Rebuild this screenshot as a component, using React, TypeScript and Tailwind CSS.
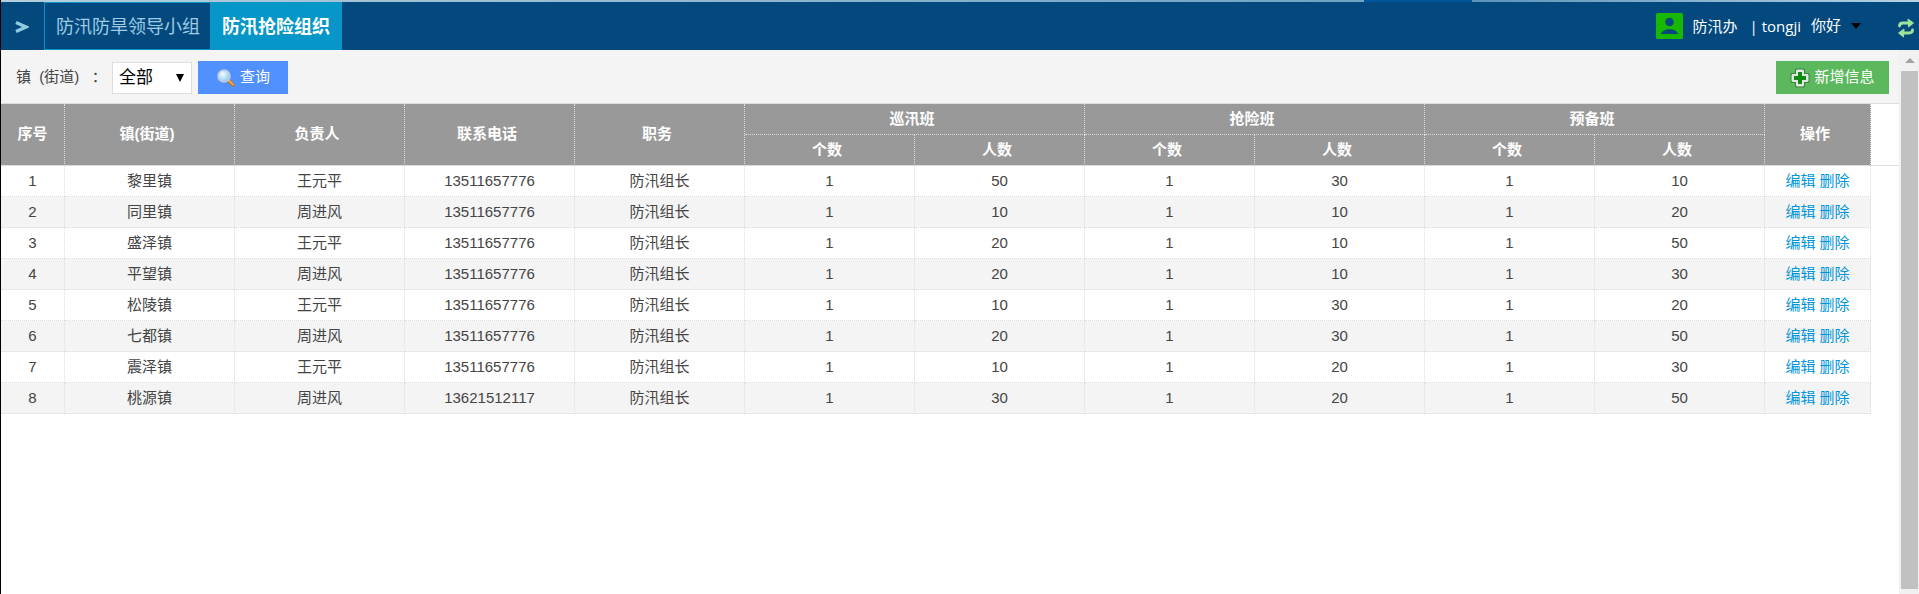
import React from "react";

const rows = [
  ["黎里镇", "王元平", "13511657776", 50, 30, 10],
  ["同里镇", "周进风", "13511657776", 10, 10, 20],
  ["盛泽镇", "王元平", "13511657776", 20, 10, 50],
  ["平望镇", "周进风", "13511657776", 20, 10, 30],
  ["松陵镇", "王元平", "13511657776", 10, 30, 20],
  ["七都镇", "周进风", "13511657776", 20, 30, 50],
  ["震泽镇", "王元平", "13511657776", 10, 20, 30],
  ["桃源镇", "周进风", "13621512117", 30, 20, 50],
];

function SearchIcon() {
  return (
    <svg width="20" height="20" viewBox="0 0 20 20" aria-hidden="true">
      <defs>
        <radialGradient id="lens" cx="0.4" cy="0.35" r="0.7">
          <stop offset="0" stopColor="#f4fcff" />
          <stop offset="1" stopColor="#86c6ee" />
        </radialGradient>
      </defs>
      <path d="M12.5 12.5 L17 17" stroke="#b0702a" strokeWidth="3.6" strokeLinecap="round" />
      <path d="M12.5 12.2 L17 16.6" stroke="#f6a93b" strokeWidth="2" strokeLinecap="round" />
      <circle cx="8" cy="8" r="6" fill="url(#lens)" stroke="#b9cbdc" strokeWidth="1.6" />
    </svg>
  );
}

function PlusIcon() {
  return (
    <svg width="20" height="20" viewBox="0 0 20 20" aria-hidden="true">
      <path d="M6 0.5 h8 l1 1 v3.500 h3.500 l1 1 v8 l-1 1 h-3.500 v3.500 l-1 1 h-8 l-1 -1 v-3.500 h-3.500 l-1 -1 v-8 l1 -1 h3.500 v-3.500 z" fill="#3f8440" />
      <path d="M7 1.500 h6 l1 1 v3.500 h3.500 l1 1 v6 l-1 1 h-3.500 v3.500 l-1 1 h-6 l-1 -1 v-3.500 h-3.500 l-1 -1 v-6 l1 -1 h3.500 v-3.500 z" fill="#e0e8e0" />
      <path d="M8 4 h4 v4 h4 v4 h-4 v4 h-4 v-4 h-4 v-4 h4 z" fill="#0f8a12" />
    </svg>
  );
}

function RefreshIcon() {
  return (
    <svg width="18" height="20" viewBox="0 0 18 20" aria-hidden="true">
      <g fill="none" stroke="#9be39a" strokeWidth="2.800" strokeLinecap="round" strokeLinejoin="round">
        <path d="M2.500 8 Q2.500 5 6 5 H12" />
        <path d="M15.500 12 Q15.500 15 12 15 H6" />
      </g>
      <path d="M11 1 L16.500 5 L11.500 9 Z" fill="#9be39a" stroke="#9be39a" strokeLinejoin="round" />
      <path d="M7 11 L1.500 15 L6.500 19 Z" fill="#9be39a" stroke="#9be39a" strokeLinejoin="round" />
    </svg>
  );
}

const headLines = "border-r border-b border-[#ddd] font-bold [border-right-style:dotted]";
const headCell = `${headLines} pr-[5px]`;
const cell = "border-r border-b border-dotted border-[#ddd]";

export default function App() {
  return (
    <div className="flex min-h-screen flex-col border-l border-black bg-white font-['Liberation_Sans','Noto_Sans_CJK_SC',sans-serif] text-[15px] text-[#444]">
      <div className="flex h-[2px]">
        <div className="grow-[1363] bg-linear-to-r from-[#b5cfdc] to-[#6fa3c4]" />
        <div className="grow-[108] bg-[#00559b]" />
        <div className="grow-[447] bg-linear-to-r from-[#5b93b9] to-[#b5d3e6]" />
      </div>
      <header className="flex h-12 items-stretch justify-between bg-[#03497e]">
        <nav className="flex items-stretch text-[18px]">
          <button type="button" aria-label="展开菜单" className="flex w-[43px] items-center justify-center pr-[2px] pt-[2px]">
            <svg width="14" height="14" viewBox="0 0 14 14" aria-hidden="true">
              <path d="M1 2.500 L11 7 L1 11.500" fill="none" stroke="#90cce0" strokeWidth="3.200" />
            </svg>
          </button>
          <a href="#leaders" className="flex items-center border-y border-l border-[#0696c8] pt-[2px] pr-[10px] pl-[11px] text-[#9fcbe3]">
            防汛防旱领导小组
          </a>
          <a href="#rescue" className="flex items-center bg-[#0696c8] px-3 pt-[2px] font-bold text-white">
            防汛抢险组织
          </a>
        </nav>
        <div className="flex items-center text-[15px] text-white">
          <svg width="27" height="26" viewBox="0 0 27 26" aria-hidden="true">
            <rect width="27" height="26" rx="1.500" fill="#18b800" />
            <circle cx="13.500" cy="9" r="4.300" fill="#03497e" />
            <path d="M5 21 C6 14.500 21 14.500 22 21 Z" fill="#03497e" />
          </svg>
          <span className="ml-[10px] pt-[2px]">防汛办</span>
          <span className="ml-3 font-['Open_Sans','Noto_Sans_CJK_SC',sans-serif]">| tongji</span>
          <button type="button" className="ml-[10px] flex items-center gap-[10px]">
            你好
            <svg width="10" height="6" viewBox="0 0 10 6" aria-hidden="true">
              <path d="M0 0 H10 L5 6 Z" fill="#000" />
            </svg>
          </button>
          <button type="button" aria-label="刷新" className="mr-1 ml-9 pt-1">
            <RefreshIcon />
          </button>
        </div>
      </header>
      <div className="flex flex-1 items-stretch">
        <main className="min-w-0 flex-1">
          <div className="flex h-[54px] items-center justify-between border-b border-[#ddd] bg-[#f4f4f4] pt-[2px] pr-[10px] pl-[15px]">
            <form className="flex items-center" onSubmit={(e) => e.preventDefault()}>
              <label htmlFor="town" className="w-24 whitespace-nowrap">镇&nbsp; (街道)&nbsp;&nbsp; ：</label>
              <span className="relative flex items-center">
                <select id="town" className="h-8 w-20 appearance-none border border-[#ddd] bg-white pl-[6px] text-[17px] text-black">
                  <option>全部</option>
                </select>
                <svg className="pointer-events-none absolute right-2" width="8" height="8" viewBox="0 0 8 8" aria-hidden="true">
                  <path d="M0 0 H8 L4 8 Z" fill="#000" />
                </svg>
              </span>
              <button type="submit" className="ml-[6px] flex h-[33px] w-[90px] items-center justify-center gap-1 bg-[#5090ff] text-white">
                <SearchIcon />
                查询
              </button>
            </form>
            <button type="button" className="flex h-[33px] w-[113px] items-center justify-center gap-1 bg-[#5cb85c] text-white">
              <PlusIcon />
              新增信息
            </button>
          </div>
          <table className="w-full table-fixed border-separate border-spacing-0 text-center">
            <colgroup>
              <col className="w-16" />
              {Array.from({ length: 10 }, (_, i) => (
                <col key={i} />
              ))}
              <col className="w-[106px]" />
              <col className="w-7" />
            </colgroup>
            <thead className="text-white [&_th]:bg-[#999]">
              <tr className="h-[31px]">
                <th rowSpan={2} className={headLines}>序号</th>
                {["镇(街道)", "负责人", "联系电话", "职务"].map((t) => (
                  <th key={t} rowSpan={2} className={headCell}>{t}</th>
                ))}
                {["巡汛班", "抢险班", "预备班"].map((t) => (
                  <th key={t} colSpan={2} className={`${headCell} border-dotted`}>{t}</th>
                ))}
                <th rowSpan={2} className={headCell}>操作</th>
                <td rowSpan={2} className="border-b border-[#ddd]" />
              </tr>
              <tr className="h-[31px]">
                {["个数", "人数", "个数", "人数", "个数", "人数"].map((t, i) => (
                  <th key={i} className={headCell}>{t}</th>
                ))}
              </tr>
            </thead>
            <tbody>
              {rows.map(([town, leader, phone, patrol, rescue, reserve], i) => (
                <tr key={i} className="h-[31px] even:*:bg-[#f4f4f4]">
                  <td className={cell}>{i + 1}</td>
                  <td className={cell}>{town}</td>
                  <td className={cell}>{leader}</td>
                  <td className={cell}>{phone}</td>
                  <td className={cell}>防汛组长</td>
                  <td className={cell}>1</td>
                  <td className={cell}>{patrol}</td>
                  <td className={cell}>1</td>
                  <td className={cell}>{rescue}</td>
                  <td className={cell}>1</td>
                  <td className={cell}>{reserve}</td>
                  <td className={`${cell} text-[#0095db]`}>
                    <a href="#edit">编辑</a> <a href="#delete">删除</a>
                  </td>
                </tr>
              ))}
            </tbody>
          </table>
        </main>
        <div className="flex w-5 flex-col bg-[#f1f1f1] pr-px pb-[5px] pl-[2px]" aria-hidden="true">
          <div className="flex h-[21px] items-center justify-center">
            <svg width="10" height="5" viewBox="0 0 10 5">
              <path d="M0 5 H10 L5 0 Z" fill="#a3a3a3" />
            </svg>
          </div>
          <div className="flex-1 bg-[#c1c1c1]" />
        </div>
      </div>
    </div>
  );
}
